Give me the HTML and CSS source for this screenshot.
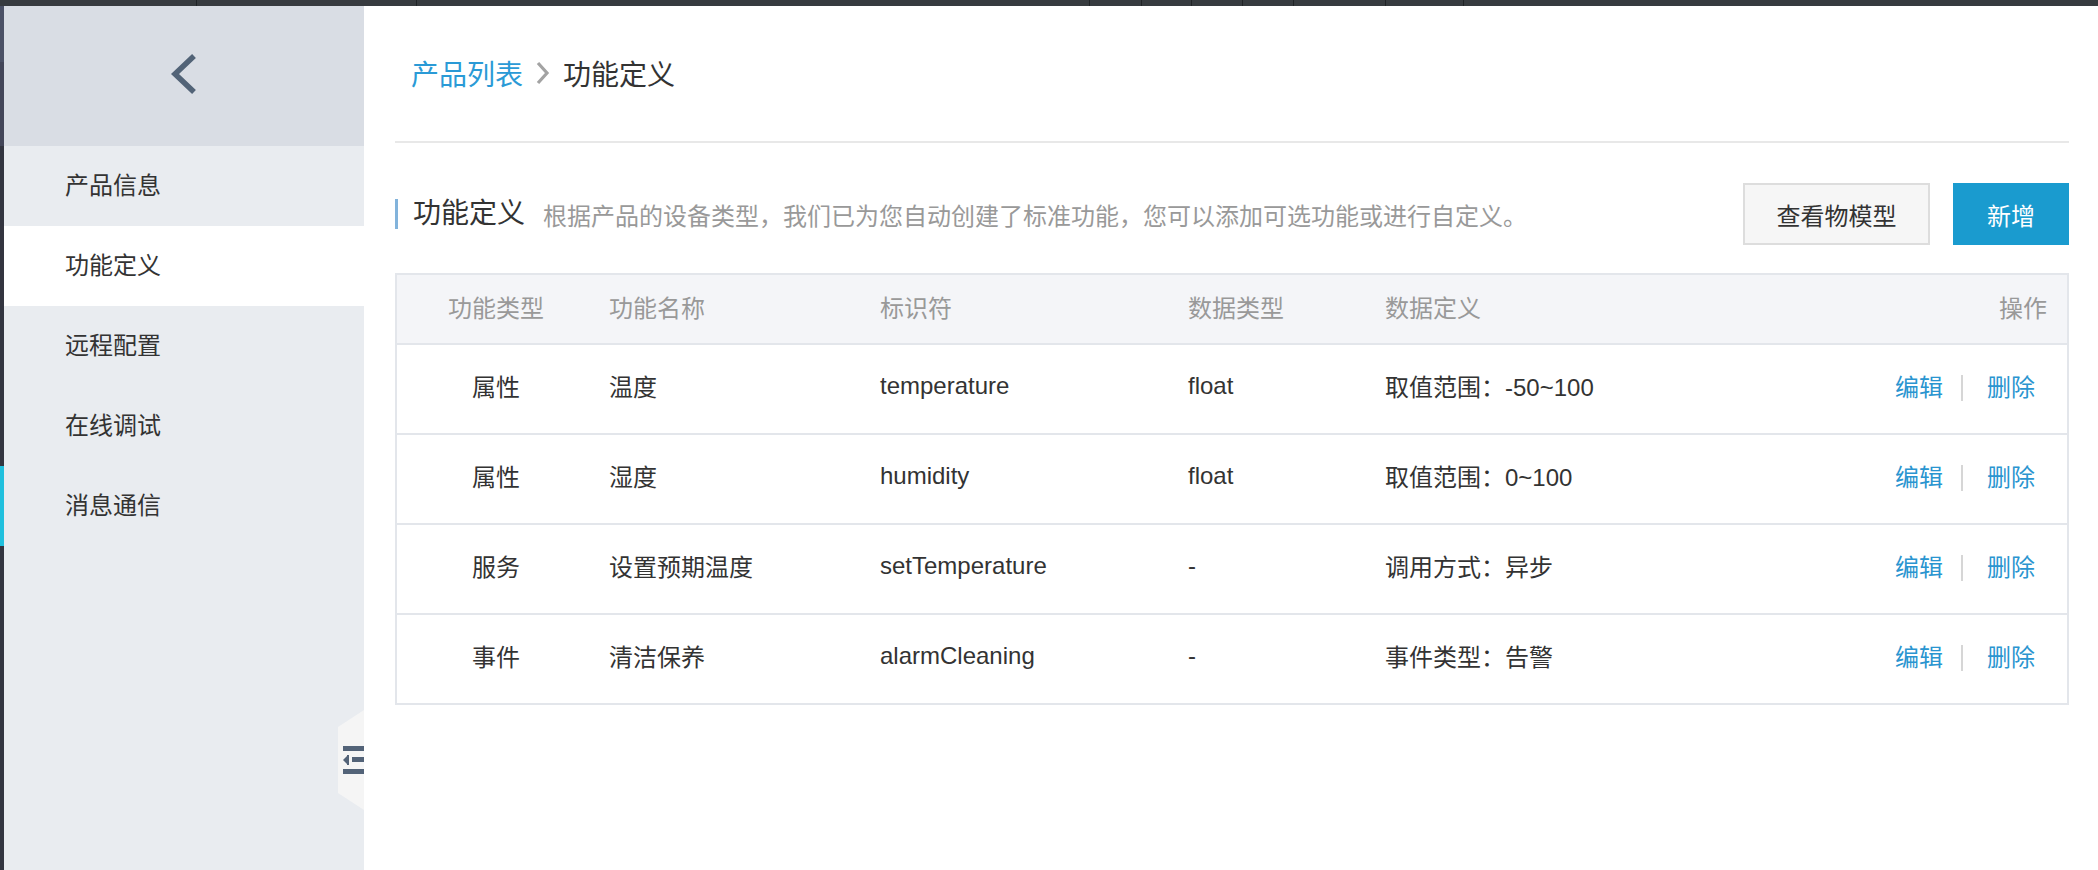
FILE: index.html
```html
<!DOCTYPE html>
<html lang="zh">
<head>
<meta charset="utf-8">
<title>功能定义</title>
<link rel="stylesheet" href="styles.css">
</head>
<body>
<div class="topbar">
  <div class="seg s1"></div><div class="seg s2"></div><div class="seg s3"></div><div class="seg s4"></div><div class="seg s5"></div><div class="seg s6"></div><div class="seg s7"></div><div class="seg s8"></div><div class="seg s9"></div><div class="seg s10"></div>
</div>
<div class="app">
  <div class="rail">
    <div class="r1"></div><div class="r2"></div><div class="r3"></div><div class="r4"></div><div class="r5"></div>
  </div>
  <aside class="sidebar">
    <div class="side-head">
      <svg class="back" width="30" height="42" viewBox="0 0 30 42"><polyline points="25,3 6,21 25,39" fill="none" stroke="#526377" stroke-width="5.5"/></svg>
    </div>
    <nav class="menu">
      <div class="item">产品信息</div>
      <div class="item active">功能定义</div>
      <div class="item">远程配置</div>
      <div class="item">在线调试</div>
      <div class="item">消息通信</div>
    </nav>
    <div class="toggle">
      <svg width="26" height="100" viewBox="0 0 26 100">
        <rect x="5" y="36" width="21" height="5" fill="#536378"/>
        <polygon points="5,50 9,46 9,54" fill="#536378"/>
        <rect x="9" y="45" width="2" height="10" fill="#536378"/>
        <rect x="14" y="47" width="12" height="5" fill="#536378"/>
        <rect x="5" y="59" width="21" height="5" fill="#536378"/>
      </svg>
    </div>
  </aside>
  <main class="main">
    <div class="crumbs">
      <span class="crumb-link">产品列表</span>
      <svg class="crumb-sep" width="16" height="24" viewBox="0 0 16 24"><polyline points="3,2 12,12 3,22" fill="none" stroke="#a3a3a3" stroke-width="3.2"/></svg>
      <span class="crumb-cur">功能定义</span>
    </div>
    <div class="section">
      <div class="sec-title">功能定义</div>
      <div class="sec-desc">根据产品的设备类型，我们已为您自动创建了标准功能，您可以添加可选功能或进行自定义。</div>
      <div class="btn btn-default">查看物模型</div>
      <div class="btn btn-primary">新增</div>
    </div>
    <div class="table">
      <div class="row head">
        <div class="c c1">功能类型</div><div class="c">功能名称</div><div class="c">标识符</div><div class="c">数据类型</div><div class="c">数据定义</div><div class="c c6">操作</div>
      </div>
      <div class="row">
        <div class="c c1">属性</div><div class="c">温度</div><div class="c">temperature</div><div class="c">float</div><div class="c">取值范围：-50~100</div>
        <div class="c c6 ops"><span class="link">编辑</span><span class="bar"></span><span class="link">删除</span></div>
      </div>
      <div class="row">
        <div class="c c1">属性</div><div class="c">湿度</div><div class="c">humidity</div><div class="c">float</div><div class="c">取值范围：0~100</div>
        <div class="c c6 ops"><span class="link">编辑</span><span class="bar"></span><span class="link">删除</span></div>
      </div>
      <div class="row">
        <div class="c c1">服务</div><div class="c">设置预期温度</div><div class="c">setTemperature</div><div class="c">-</div><div class="c">调用方式：异步</div>
        <div class="c c6 ops"><span class="link">编辑</span><span class="bar"></span><span class="link">删除</span></div>
      </div>
      <div class="row last">
        <div class="c c1">事件</div><div class="c">清洁保养</div><div class="c">alarmCleaning</div><div class="c">-</div><div class="c">事件类型：告警</div>
        <div class="c c6 ops"><span class="link">编辑</span><span class="bar"></span><span class="link">删除</span></div>
      </div>
    </div>
  </main>
</div>
</body>
</html>
```
FILE: styles.css
```css
* { box-sizing: border-box; }
html, body { margin: 0; padding: 0; }
body {
  width: 2098px;
  height: 870px;
  overflow: hidden;
  background: #fff;
  font-family: "Liberation Sans", "Noto Sans CJK SC", sans-serif;
  color: #333;
}
.topbar {
  height: 6px;
  display: flex;
  background: #373b3f;
}
.seg { height: 6px; border-right: 1px solid #202326; }
.s1 { flex: 0 0 197px; }
.s2 { flex: 0 0 220px; }
.s3 { flex: 0 0 673px; }
.s4 { flex: 0 0 52px; }
.s5 { flex: 0 0 50px; }
.s6 { flex: 0 0 51px; }
.s7 { flex: 0 0 51px; }
.s8 { flex: 0 0 92px; }
.s9 { flex: 0 0 78px; }
.s10 { flex: 1 1 auto; border-right: 0; }

.app { display: flex; height: 864px; }
.rail { width: 4px; display: flex; flex-direction: column; }
.r1 { height: 56px; background: #4b5166; }
.r2 { height: 84px; background: #434659; }
.r3 { height: 320px; background: #333540; }
.r4 { height: 80px; background: #20c0de; }
.r5 { flex: 1; background: #333540; }

.sidebar {
  position: relative;
  width: 360px;
  background: #e9ecf0;
  display: flex;
  flex-direction: column;
}
.side-head {
  height: 140px;
  background: #d9dde4;
  display: flex;
  justify-content: center;
  align-items: flex-start;
  padding-top: 47px;
}
.menu { display: flex; flex-direction: column; }
.item {
  height: 80px;
  display: flex;
  align-items: center;
  padding-left: 61px;
  padding-bottom: 5px;
  font-size: 24px;
  color: #333;
}
.item.active { background: #fff; }
.toggle {
  position: absolute;
  right: 0;
  top: 704px;
  width: 26px;
  height: 100px;
  background: #f5f5f5;
  clip-path: polygon(100% 0, 0 17px, 0 83px, 100% 100%);
}
.toggle svg { display: block; }

.main {
  flex: 1;
  padding: 0 29px 0 31px;
  display: flex;
  flex-direction: column;
}
.crumbs {
  height: 137px;
  border-bottom: 2px solid #e8e8e8;
  display: flex;
  align-items: center;
  padding-left: 16px;
  padding-bottom: 2px;
  font-size: 28px;
}
.crumb-link { color: #2a9ad6; }
.crumb-sep { margin: 0 12px 0 12px; }
.crumb-cur { color: #333; }

.section {
  margin-top: 40px;
  height: 62px;
  margin-bottom: 28px;
  display: flex;
  align-items: center;
}
.sec-title {
  font-size: 28px;
  color: #333;
  border-left: 3px solid #82b3db;
  padding-left: 15px;
  line-height: 30px;
  margin-right: 18px;
}
.sec-desc {
  flex: 1;
  font-size: 24px;
  color: #999;
}
.btn {
  height: 62px;
  display: flex;
  align-items: center;
  justify-content: center;
  font-size: 24px;
}
.btn-default {
  width: 187px;
  background: #f6f6f6;
  border: 2px solid #dddddd;
  color: #333;
  margin-right: 23px;
}
.btn-primary {
  width: 116px;
  background: #1a9bcf;
  color: #fff;
}

.table {
  border: 2px solid #e3e6eb;
  border-bottom: 0;
}
.row {
  display: grid;
  grid-template-columns: 198px 271px 308px 197px 1fr 300px;
  height: 90px;
  border-bottom: 2px solid #e3e6eb;
  align-items: center;
  font-size: 24px;
  color: #333;
  padding-bottom: 7px;
}
.row.head {
  height: 70px;
  background: #f4f5f8;
  color: #999;
  padding-bottom: 6px;
}
.c { padding-left: 14px; white-space: nowrap; }
.c1 { text-align: center; padding-left: 0; }
.c6 {
  text-align: right;
  padding-right: 20px;
  display: flex;
  justify-content: flex-end;
  align-items: center;
}
.ops { padding-right: 32px; }
.link { color: #2a95d0; }
.bar {
  display: inline-block;
  width: 2px;
  height: 26px;
  background: #d6d6d6;
  margin: 4px 24px 0 18px;
}
```
